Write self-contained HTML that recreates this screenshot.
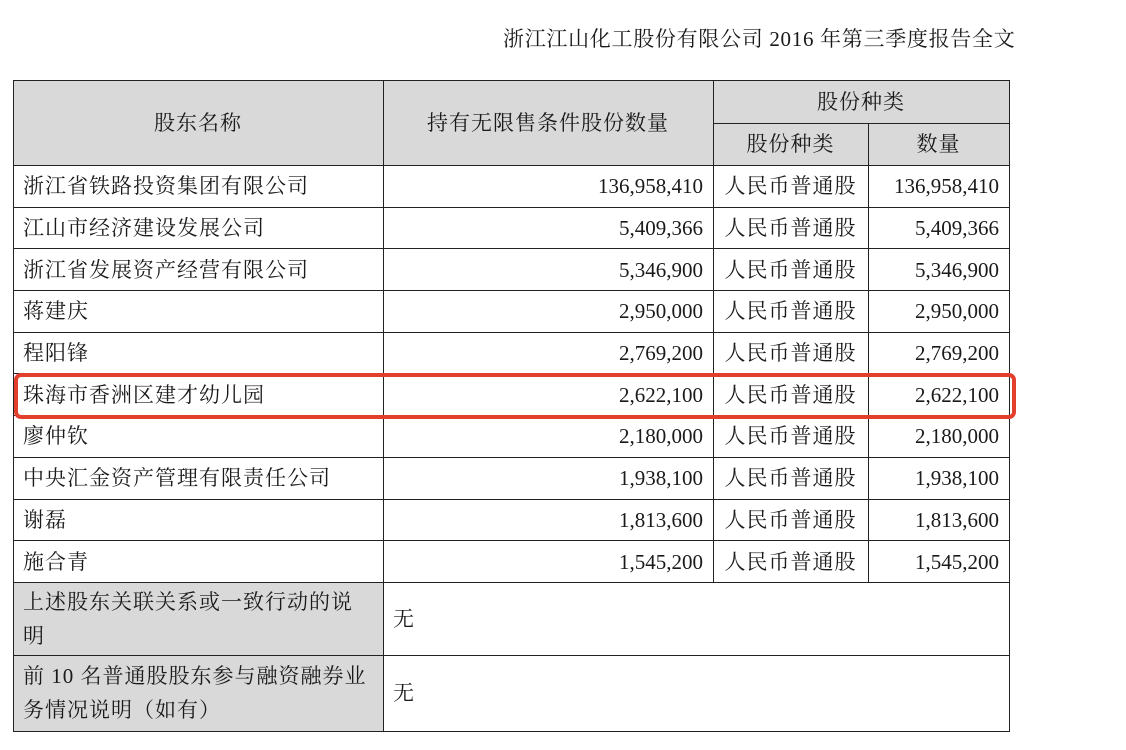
<!DOCTYPE html>
<html><head><meta charset="utf-8"><style>
body{margin:0;width:1126px;height:750px;background:#fff;position:relative;overflow:hidden;font-family:"Liberation Serif","Noto Serif CJK SC",serif;color:#1a1a1a}
.title{position:absolute;left:503px;top:23px;font-size:21px;letter-spacing:0.7px;white-space:nowrap}
table{position:absolute;left:13px;top:80px;border-collapse:collapse;table-layout:fixed;font-size:21px;letter-spacing:1px}
td{border:1.5px solid #222;padding:0 10px 0 9px;height:40.7px;white-space:nowrap;line-height:24px;vertical-align:middle}
.h{background:#d9d9d9;text-align:center}
.r{text-align:right;letter-spacing:0}
.c{text-align:center}
.red{position:absolute;left:14px;top:373px;width:994px;height:38px;border:4px solid #e2402c;border-radius:7px}
</style></head><body>
<div class="title">浙江江山化工股份有限公司 2016 年第三季度报告全文</div>
<table>
<colgroup><col style="width:370px"><col style="width:330px"><col style="width:155px"><col style="width:141px"></colgroup>
<tr><td class="h" rowspan="2" style="height:84px">股东名称</td><td class="h" rowspan="2">持有无限售条件股份数量</td><td class="h" colspan="2" style="height:41px">股份种类</td></tr>
<tr><td class="h">股份种类</td><td class="h">数量</td></tr>
<tr><td>浙江省铁路投资集团有限公司</td><td class="r">136,958,410</td><td class="c">人民币普通股</td><td class="r">136,958,410</td></tr>
<tr><td>江山市经济建设发展公司</td><td class="r">5,409,366</td><td class="c">人民币普通股</td><td class="r">5,409,366</td></tr>
<tr><td>浙江省发展资产经营有限公司</td><td class="r">5,346,900</td><td class="c">人民币普通股</td><td class="r">5,346,900</td></tr>
<tr><td>蒋建庆</td><td class="r">2,950,000</td><td class="c">人民币普通股</td><td class="r">2,950,000</td></tr>
<tr><td>程阳锋</td><td class="r">2,769,200</td><td class="c">人民币普通股</td><td class="r">2,769,200</td></tr>
<tr><td>珠海市香洲区建才幼儿园</td><td class="r">2,622,100</td><td class="c">人民币普通股</td><td class="r">2,622,100</td></tr>
<tr><td>廖仲钦</td><td class="r">2,180,000</td><td class="c">人民币普通股</td><td class="r">2,180,000</td></tr>
<tr><td>中央汇金资产管理有限责任公司</td><td class="r">1,938,100</td><td class="c">人民币普通股</td><td class="r">1,938,100</td></tr>
<tr><td>谢磊</td><td class="r">1,813,600</td><td class="c">人民币普通股</td><td class="r">1,813,600</td></tr>
<tr><td>施合青</td><td class="r">1,545,200</td><td class="c">人民币普通股</td><td class="r">1,545,200</td></tr>
<tr><td class="h" style="text-align:left;height:72px;white-space:normal;line-height:34px">上述股东关联关系或一致行动的说明</td><td colspan="3">无</td></tr>
<tr><td class="h" style="text-align:left;height:75px;white-space:normal;line-height:34px">前 10 名普通股股东参与融资融券业务情况说明（如有）</td><td colspan="3">无</td></tr>
</table>
<div class="red"></div>
</body></html>
